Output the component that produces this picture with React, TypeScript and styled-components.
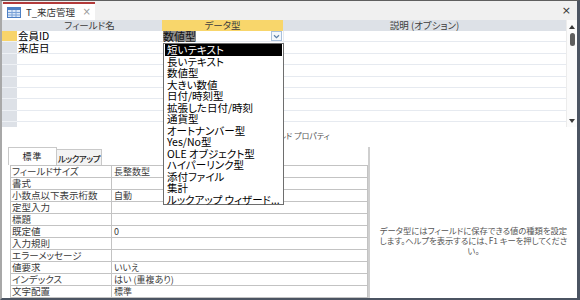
import React from "react";
import styled, { createGlobalStyle } from "styled-components";

const GlobalStyle = createGlobalStyle`
  html, body { margin: 0; padding: 0; background: #fff; }
  body { font-family: "Noto Sans CJK JP", "Noto Sans", sans-serif; }
  * { box-sizing: border-box; }
`;

const Frame = styled.div`
  position: relative;
  width: 580px;
  height: 300px;
  display: flex;
  flex-direction: column;
  border-top: 1px solid #5f5f5f;
  border-left: 2px solid #a8a8a8;
  border-right: 3px solid #4b5462;
  border-bottom: 2px solid #4b5462;
  overflow: hidden;
  font-family: "Noto Sans CJK JP", sans-serif;
  font-feature-settings: "palt";
  background: #fff;
`;

const TabStrip = styled.div`
  height: 19px;
  flex: none;
  display: flex;
  align-items: flex-end;
  justify-content: space-between;
  background: #f0f0f0;
  padding: 0 6px 0 1px;
`;

const DocTab = styled.div`
  width: 92px;
  height: 18px;
  background: #fff;
  border-top: 2px solid #b23a3a;
  display: flex;
  align-items: center;
  padding: 0 4px 0 4px;
  gap: 5px;
  font-size: 9.5px;
  color: #333;
`;

const TabTitle = styled.span`
  flex: 1;
  line-height: 12px;
  white-space: nowrap;
`;

const CloseMark = styled.span<{ $size?: number; $color?: string }>`
  font-family: "DejaVu Sans", sans-serif;
  font-size: ${(p) => p.$size ?? 10}px;
  color: ${(p) => p.$color ?? "#9a9a9a"};
  line-height: 12px;
  align-self: center;
`;

const DesignPane = styled.div`
  height: 107px;
  flex: none;
  display: flex;
`;

const DesignGrid = styled.div`
  flex: 1;
  display: grid;
  grid-template-columns: 15px 145px 121px 1fr;
  grid-template-rows: 11px;
  grid-auto-rows: 11.4px;
  overflow: hidden;
`;

const HeadCell = styled.div<{ $active?: boolean }>`
  background: ${(p) => (p.$active ? "#f8d66b" : "#dde1e7")};
  font-size: 9.5px;
  color: #3c3c3c;
  display: flex;
  align-items: center;
  justify-content: center;
  line-height: 11px;
  white-space: nowrap;
`;

const Selector = styled.div<{ $current?: boolean }>`
  background: ${(p) => (p.$current ? "#f8d46a" : "#dde1e7")};
  border-bottom: 1px solid #eef1f5;
`;

const Cell = styled.div<{ $edge?: boolean }>`
  border-bottom: 1px solid #e6eaf0;
  border-left: ${(p) => (p.$edge ? "1px solid #e6eaf0" : "none")};
  font-size: 10.5px;
  color: #000;
  line-height: 10px;
  display: flex;
  align-items: center;
  padding-left: 1px;
  white-space: nowrap;
`;

const ComboCell = styled(Cell)`
  justify-content: space-between;
  padding-right: 1px;
`;

const SelectedText = styled.span`
  background: #8c8c8c;
  color: #111;
  font-size: 11px;
  line-height: 10px;
`;

const DropButton = styled.span`
  width: 11px;
  height: 10px;
  border: 1px solid #a9c1dc;
  background: #f4f8fc;
  display: flex;
  align-items: center;
  justify-content: center;
`;

const Scrollbar = styled.div`
  width: 11px;
  flex: none;
  display: flex;
  flex-direction: column;
  align-items: center;
  background: #fbfbfb;
  border-left: 1px solid #ececec;
  padding: 3px 0 4px;
`;

const ArrowUp = styled.span`
  width: 0;
  height: 0;
  border-left: 3px solid transparent;
  border-right: 3px solid transparent;
  border-bottom: 4px solid #3a3a3a;
  margin-top: 2px;
`;

const ArrowDown = styled.span`
  width: 0;
  height: 0;
  border-left: 3px solid transparent;
  border-right: 3px solid transparent;
  border-top: 4px solid #3a3a3a;
`;

const Thumb = styled.span`
  width: 5px;
  height: 13px;
  border-radius: 3px;
  background: #5e5e5e;
  margin-top: 4px;
`;

const Spacer = styled.span`
  flex: 1;
`;

const SectionLabel = styled.div`
  height: 20px;
  flex: none;
  display: flex;
  align-items: center;
  padding-left: 256px;
  padding-bottom: 4px;
  font-size: 8px;
  color: #555;
  white-space: nowrap;
`;

const PropsPane = styled.div`
  flex: 1;
  display: flex;
  min-height: 0;
`;

const PropsLeft = styled.div`
  width: 368px;
  flex: none;
  display: flex;
  flex-direction: column;
  padding-left: 6px;
  border-right: 2px solid #cfcfcf;
`;

const PropTabs = styled.div`
  height: 18px;
  display: flex;
  align-items: flex-end;
`;

const PropTab = styled.div<{ $active?: boolean }>`
  width: ${(p) => (p.$active ? 49 : 45)}px;
  height: ${(p) => (p.$active ? 18 : 16)}px;
  background: ${(p) => (p.$active ? "#fff" : "#f3f3f3")};
  border: 1px solid #c9c9c9;
  border-bottom: none;
  border-left: ${(p) => (p.$active ? "1px solid #c9c9c9" : "none")};
  display: flex;
  align-items: center;
  justify-content: center;
  font-size: ${(p) => (p.$active ? 9 : 8.5)}px;
  color: #222;
  white-space: nowrap;
  font-weight: ${(p) => (p.$active ? 400 : 500)};
  letter-spacing: ${(p) => (p.$active ? "1px" : "-0.4px")};
`;

const PropTable = styled.div`
  margin-left: 2px;
  width: 358px;
  border-top: 1px solid #c3c3c3;
  border-left: 1px solid #c3c3c3;
  border-right: 1px solid #c3c3c3;
`;

const PropRow = styled.div`
  display: grid;
  grid-template-columns: 101px 1fr;
  height: 12px;
  border-bottom: 1px solid #c3c3c3;
`;

const PropLabel = styled.div`
  border-right: 1px solid #c3c3c3;
  font-size: 9.5px;
  color: #3a3a3a;
  line-height: 11px;
  padding-left: 1px;
  white-space: nowrap;
`;

const PropValue = styled.div`
  font-size: 9px;
  color: #3a3a3a;
  line-height: 11px;
  padding-left: 2px;
  white-space: nowrap;
`;

const HelpPanel = styled.div`
  flex: 1;
  display: flex;
  flex-direction: column;
  align-items: center;
  padding-top: 78px;
  font-size: 8.3px;
  color: #555;
  line-height: 10px;
`;

const HelpLine = styled.span`
  white-space: nowrap;
`;

const DropList = styled.div`
  position: absolute;
  left: 161px;
  top: 42px;
  width: 121px;
  height: 162px;
  border: 1px solid #6e6e6e;
  background: #fff;
  padding: 0 1px;
  display: flex;
  flex-direction: column;
`;

const DropItem = styled.div<{ $selected?: boolean }>`
  height: 11.5px;
  flex: none;
  background: ${(p) => (p.$selected ? "#000" : "transparent")};
  color: ${(p) => (p.$selected ? "#fff" : "#000")};
  font-size: 10.5px;
  line-height: 11.5px;
  padding-left: 2px;
  white-space: nowrap;
`;

const TableIcon = () => (
  <svg width="14" height="11" viewBox="0 0 14 11">
    <rect x="0.5" y="0.5" width="13" height="10" fill="#dbe8f8" stroke="#4d7fc4" />
    <rect x="1" y="1" width="12" height="2" fill="#4d7fc4" />
    <path d="M1 5.5H13M1 8H13M5 3V10M9 3V10" stroke="#7aa2d8" strokeWidth="1" />
  </svg>
);

const Chevron = () => (
  <svg width="7" height="5" viewBox="0 0 7 5">
    <path d="M1 1.2L3.5 3.6L6 1.2" fill="none" stroke="#5a7fa8" strokeWidth="1.2" />
  </svg>
);

const dataTypes = [
  "短いテキスト",
  "長いテキスト",
  "数値型",
  "大きい数値",
  "日付/時刻型",
  "拡張した日付/時刻",
  "通貨型",
  "オートナンバー型",
  "Yes/No型",
  "OLE オブジェクト型",
  "ハイパーリンク型",
  "添付ファイル",
  "集計",
  "ルックアップ ウィザード...",
];

const props: [string, string][] = [
  ["フィールドサイズ", "長整数型"],
  ["書式", ""],
  ["小数点以下表示桁数", "自動"],
  ["定型入力", ""],
  ["標題", ""],
  ["既定値", "0"],
  ["入力規則", ""],
  ["エラーメッセージ", ""],
  ["値要求", "いいえ"],
  ["インデックス", "はい (重複あり)"],
  ["文字配置", "標準"],
];

const rows = [
  { name: "会員ID", combo: true },
  { name: "来店日" },
  {}, {}, {}, {}, {}, {}, {},
] as { name?: string; combo?: boolean }[];

export default function App() {
  return (
    <>
      <GlobalStyle />
      <Frame>
        <TabStrip>
          <DocTab>
            <TableIcon />
            <TabTitle>T_来店管理</TabTitle>
            <CloseMark $size={10}>×</CloseMark>
          </DocTab>
          <CloseMark $size={11} $color="#333">×</CloseMark>
        </TabStrip>

        <DesignPane>
          <DesignGrid>
            <HeadCell />
            <HeadCell>フィールド名</HeadCell>
            <HeadCell $active>データ型</HeadCell>
            <HeadCell>説明 (オプション)</HeadCell>
            {rows.map((r, i) => (
              <React.Fragment key={i}>
                <Selector $current={i === 0} />
                <Cell>{r.name ?? ""}</Cell>
                {r.combo ? (
                  <ComboCell>
                    <SelectedText>数値型</SelectedText>
                    <DropButton>
                      <Chevron />
                    </DropButton>
                  </ComboCell>
                ) : (
                  <Cell />
                )}
                <Cell $edge />
              </React.Fragment>
            ))}
          </DesignGrid>
          <Scrollbar>
            <ArrowUp />
            <Thumb />
            <Spacer />
            <ArrowDown />
          </Scrollbar>
        </DesignPane>

        <SectionLabel>フィールド プロパティ</SectionLabel>

        <PropsPane>
          <PropsLeft>
            <PropTabs>
              <PropTab $active>標準</PropTab>
              <PropTab>ルックアップ</PropTab>
            </PropTabs>
            <PropTable>
              {props.map(([k, v]) => (
                <PropRow key={k}>
                  <PropLabel>{k}</PropLabel>
                  <PropValue>{v}</PropValue>
                </PropRow>
              ))}
            </PropTable>
          </PropsLeft>
          <HelpPanel>
            <HelpLine>データ型にはフィールドに保存できる値の種類を設定</HelpLine>
            <HelpLine>します。ヘルプを表示するには、F1 キーを押してくださ</HelpLine>
            <HelpLine>い。</HelpLine>
          </HelpPanel>
        </PropsPane>

        <DropList>
          {dataTypes.map((t, i) => (
            <DropItem key={t} $selected={i === 0}>
              {t}
            </DropItem>
          ))}
        </DropList>
      </Frame>
    </>
  );
}
